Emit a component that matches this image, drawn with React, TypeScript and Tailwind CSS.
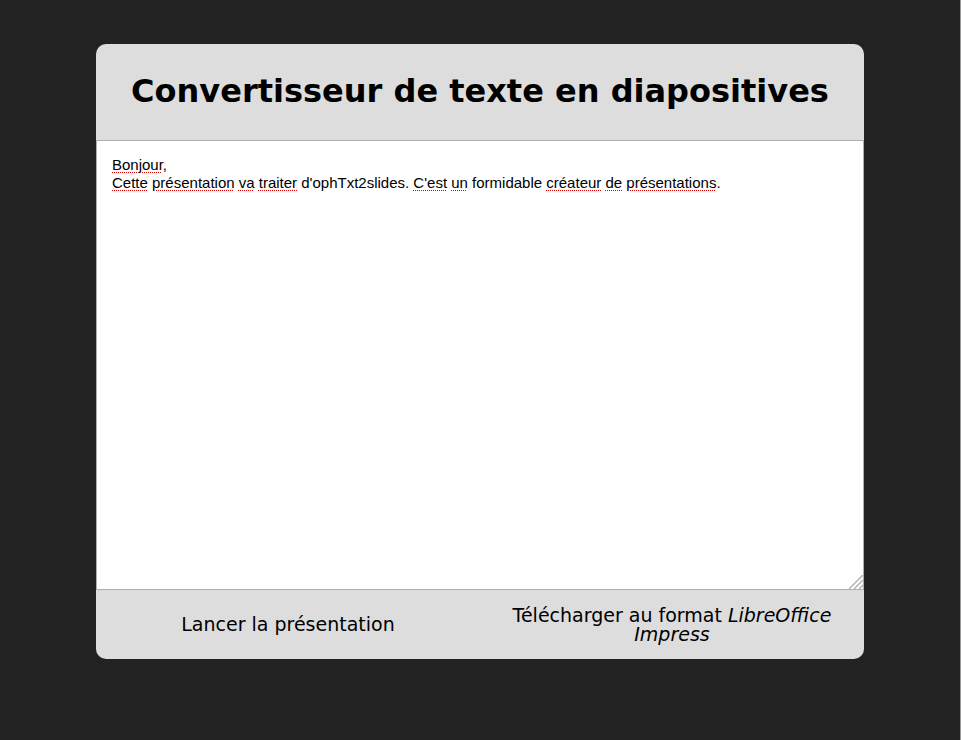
import { useState } from "react";

const INITIAL_TEXT =
  "Bonjour,\nCette présentation va traiter d'ophTxt2slides. C'est un formidable créateur de présentations.";

const UNKNOWN_WORDS = /(Bonjour|Cette|présentations?|va|traiter|C'est|un|créateur|de)(?=[\s,.]|$)/g;

const editorText =
  "col-start-1 row-start-1 border border-[#b0aeac] p-[15px] font-['Liberation_Sans',Arial,sans-serif] text-[15px] leading-[18px] whitespace-pre-wrap break-words";

function SpellingMarks({ text }: { text: string }) {
  return (
    <div aria-hidden="true" className={`${editorText} bg-white text-transparent`}>
      {text.split(UNKNOWN_WORDS).map((part, i) =>
        i % 2 === 1 ? (
          <span
            key={i}
            className="underline decoration-dotted decoration-[#e00000] decoration-1 underline-offset-2"
          >
            {part}
          </span>
        ) : (
          part
        ),
      )}
    </div>
  );
}

function ResizeGrip() {
  return (
    <svg
      aria-hidden="true"
      viewBox="0 0 14 14"
      className="pointer-events-none absolute right-px bottom-px h-3.5 w-3.5"
      fill="none"
      stroke="#b2b2b2"
      strokeWidth="1.5"
    >
      <path d="M0 14 14 0M5 14 14 5M10 14 14 10" />
    </svg>
  );
}

export default function App() {
  const [text, setText] = useState(INITIAL_TEXT);
  const action =
    "flex flex-1 cursor-pointer items-center justify-center px-5 text-center text-[19px] leading-[19px]";

  return (
    <div className="min-h-screen border-r border-[#999] bg-[#222] pt-11 pb-20 font-['DejaVu_Sans',Verdana,sans-serif] text-black">
      <main className="mx-auto w-4/5 overflow-hidden rounded-[10px] bg-[#ddd]">
        <h1 className="px-4 pt-7 pb-[30px] text-center text-[32px] leading-[38px] font-bold">
          <label htmlFor="source">Convertisseur de texte en diapositives</label>
        </h1>
        <div className="relative grid h-[450px]">
          <SpellingMarks text={text} />
          <textarea
            id="source"
            spellCheck={false}
            value={text}
            onChange={(e) => setText(e.target.value)}
            className={`${editorText} block h-full w-full resize-none bg-transparent outline-none`}
          />
          <ResizeGrip />
        </div>
        <div className="flex h-[69px]">
          <button type="button" className={action}>
            Lancer la présentation
          </button>
          <button type="button" className={action}>
            <span>
              Télécharger au format <em>LibreOffice Impress</em>
            </span>
          </button>
        </div>
      </main>
    </div>
  );
}
